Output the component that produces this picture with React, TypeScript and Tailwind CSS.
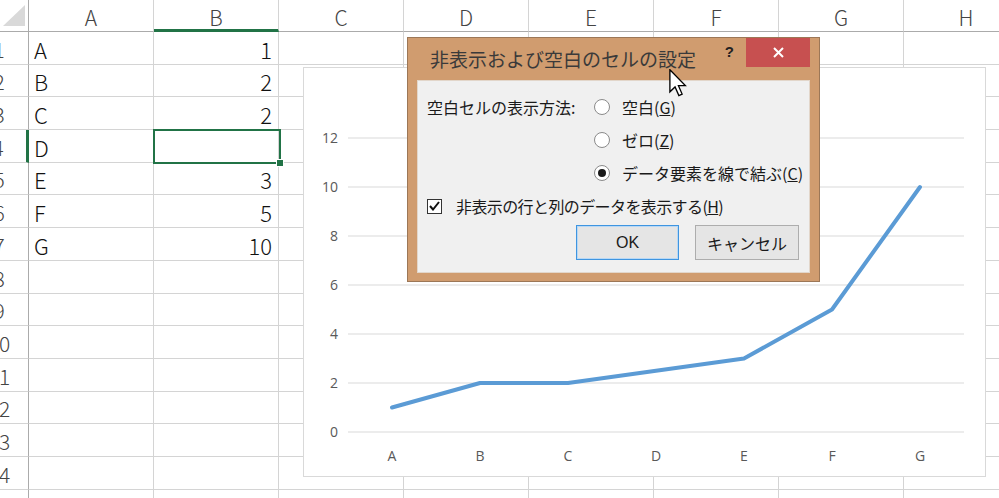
import React from 'react';

const cols = ['A', 'B', 'C', 'D', 'E', 'F', 'G', 'H'];
const data: [string, string][] = [
  ['A', '1'],
  ['B', '2'],
  ['C', '2'],
  ['D', ''],
  ['E', '3'],
  ['F', '5'],
  ['G', '10'],
];
const rowCount = 15;

function Chart() {
  const yTicks = [12, 10, 8, 6, 4, 2, 0];
  const xLabels = ['A', 'B', 'C', 'D', 'E', 'F', 'G'];
  const yOf = (v: number) => 365 - v * 24.5;
  const xOf = (i: number) => 89 + i * 88;
  const values: (number | null)[] = [1, 2, 2, null, 3, 5, 10];
  const pts = values
    .map((v, i) => (v === null ? null : `${xOf(i)},${yOf(v)}`))
    .filter(Boolean)
    .join(' ');
  return (
    <svg width="681" height="408" className="block">
      {yTicks.map((t) => (
        <g key={t}>
          <line x1="44" x2="660" y1={yOf(t) - 1} y2={yOf(t) - 1} stroke="#d9d9d9" strokeWidth="1" />
          <text
            x="34"
            y={yOf(t) + 4}
            textAnchor="end"
            fontSize="14"
            fill="#595959"
            fontFamily="'Open Sans', sans-serif"
          >
            {t}
          </text>
        </g>
      ))}
      {xLabels.map((l, i) => (
        <text
          key={l}
          x={xOf(i) - 1}
          y="393"
          textAnchor="middle"
          fontSize="14"
          fill="#595959"
          fontFamily="'Open Sans', sans-serif"
        >
          {l}
        </text>
      ))}
      <polyline
        points={pts}
        transform="translate(-1,-1)"
        fill="none"
        stroke="#5b9bd5"
        strokeWidth="4"
        strokeLinecap="round"
        strokeLinejoin="round"
      />
    </svg>
  );
}

function Radio({ checked }: { checked?: boolean }) {
  return (
    <span className="flex h-[16px] w-[16px] shrink-0 items-center justify-center rounded-full border border-[#8a8a8a] bg-white">
      {checked && <span className="h-[8px] w-[8px] rounded-full bg-[#1a1a1a]" />}
    </span>
  );
}

function Dialog() {
  return (
    <div className="absolute left-[407px] top-[37px] flex h-[245px] w-[413px] flex-col border border-[#9c7757] bg-[#d09c6f] px-[9px] pb-[8px]">
      <div className="flex h-[42px] shrink-0 items-start">
        <span className="ml-[13px] mt-[8px] whitespace-nowrap text-[19px] leading-[26px] text-[#3a3a3a]">
          非表示および空白のセルの設定
        </span>
        <span className="ml-auto mr-[12px] mt-[4px] font-['Liberation_Sans',sans-serif] text-[15px] font-bold leading-[20px] text-[#222]">
          ?
        </span>
        <span className="flex h-[29px] w-[64px] items-center justify-center bg-[#c75050]">
          <svg width="11" height="11" viewBox="0 0 11 11">
            <path d="M1 1 L10 10 M10 1 L1 10" stroke="#fff" strokeWidth="2" />
          </svg>
        </span>
      </div>
      <div className="flex flex-1 flex-col border border-[#e2d6ca] bg-[#f0f0f0] pl-[9px] pr-[10px] pt-[9px] text-[16px] leading-[20px] text-[#1a1a1a]">
        <div className="flex">
          <span className="flex h-[33px] w-[167px] shrink-0 items-center whitespace-nowrap">空白セルの表示方法:</span>
          <div className="flex flex-col">
            <div className="flex h-[33px] items-center gap-[12px] whitespace-nowrap">
              <Radio />
              <span>
                空白(<span className="underline">G</span>)
              </span>
            </div>
            <div className="flex h-[33px] items-center gap-[12px] whitespace-nowrap">
              <Radio />
              <span>
                ゼロ(<span className="underline">Z</span>)
              </span>
            </div>
            <div className="flex h-[33px] items-center gap-[12px] whitespace-nowrap">
              <Radio checked />
              <span>
                データ要素を線で結ぶ(<span className="underline">C</span>)
              </span>
            </div>
          </div>
        </div>
        <div className="flex h-[34px] items-center gap-[14px] whitespace-nowrap">
          <span className="flex h-[15px] w-[15px] shrink-0 items-center justify-center border border-[#333] bg-white">
            <svg width="11" height="10" viewBox="0 0 11 10">
              <path d="M1 5 L4 8.5 L10 1" fill="none" stroke="#111" strokeWidth="2" />
            </svg>
          </span>
          <span className="tracking-[-0.6px]">
            非表示の行と列のデータを表示する(<span className="underline">H</span>)
          </span>
        </div>
        <div className="mt-[2px] flex justify-end gap-[16px]">
          <span className="flex h-[35px] w-[103px] items-center justify-center border border-[#3f95e0] bg-[#e5e5e5] shadow-[inset_0_0_0_1px_#b8d8f5] font-['Liberation_Sans',sans-serif] text-[16px]">
            OK
          </span>
          <span className="flex h-[35px] w-[104px] items-center justify-center border border-[#adadad] bg-[#e5e5e5]">
            キャンセル
          </span>
        </div>
      </div>
    </div>
  );
}

export default function App() {
  return (
    <div className="relative h-[498px] w-[999px] overflow-hidden bg-white font-['Noto_Sans_CJK_JP',sans-serif]">
      <div className="-ml-[30px] flex flex-col">
        <div className="flex h-[32px] shrink-0">
          <div className="relative w-[59px] shrink-0 border-b border-r border-[#ababab]">
            <svg width="22" height="21" className="absolute left-[33px] top-[5px]">
              <polygon points="22,0 22,21 0,21" fill="#d9d9d9" />
            </svg>
          </div>
          {cols.map((c) => (
            <div
              key={c}
              className={
                c === 'B'
                  ? 'flex w-[125px] shrink-0 items-end justify-center border-b-[3px] border-r border-b-[#217346] border-r-[#d4d4d4] pb-[1px] text-[21px] font-light leading-none text-[#444]'
                  : 'flex w-[125px] shrink-0 items-end justify-center border-b border-r border-b-[#ababab] border-r-[#d4d4d4] pb-[3px] text-[21px] font-light leading-none text-[#444]'
              }
            >
              {c}
            </div>
          ))}
        </div>
        {Array.from({ length: rowCount }).map((_, r) => {
          const d = data[r];
          return (
            <div key={r} className="flex h-[32.7px] shrink-0">
              <div
                className={
                  r === 3
                    ? 'flex w-[59px] shrink-0 items-end justify-center border-b border-r-[3px] border-b-[#d4d4d4] border-r-[#217346] pb-[4px] text-[21px] font-light leading-none text-[#444]'
                    : 'flex w-[59px] shrink-0 items-end justify-center border-b border-r border-b-[#d4d4d4] border-r-[#ababab] pb-[4px] text-[21px] font-light leading-none text-[#444]'
                }
              >
                {r + 1}
              </div>
              {cols.map((c, ci) => (
                <div
                  key={c}
                  className={
                    ci === 1
                      ? 'flex w-[125px] shrink-0 items-end justify-end border-b border-r border-[#d4d4d4] pb-[4px] pr-[6px] text-[22px] font-light leading-none text-[#111]'
                      : 'flex w-[125px] shrink-0 items-end justify-start border-b border-r border-[#d4d4d4] pb-[4px] pl-[5px] text-[22px] font-light leading-none text-[#111]'
                  }
                >
                  {d && ci === 0 ? d[0] : d && ci === 1 ? d[1] : ''}
                </div>
              ))}
            </div>
          );
        })}
      </div>

      {/* active cell selection */}
      <div className="absolute left-[153px] top-[129px] h-[35px] w-[128px] border-2 border-[#217346]" />
      <div className="absolute left-[276px] top-[159px] h-[8px] w-[8px] border border-white bg-[#217346]" />

      {/* chart */}
      <div className="absolute left-[303px] top-[67px] h-[410px] w-[683px] border border-[#d9d9d9] bg-white">
        <Chart />
      </div>

      <Dialog />

      {/* mouse cursor */}
      <svg width="18" height="28" viewBox="0 0 12 19" className="absolute left-[669px] top-[69px]">
        <path
          d="M0.5 0.5 L0.5 15.5 L4 12.2 L6.6 18 L8.8 17 L6.3 11.3 L11 11.3 Z"
          fill="#fff"
          stroke="#000"
          strokeWidth="0.9"
          strokeLinejoin="miter"
        />
      </svg>
    </div>
  );
}
